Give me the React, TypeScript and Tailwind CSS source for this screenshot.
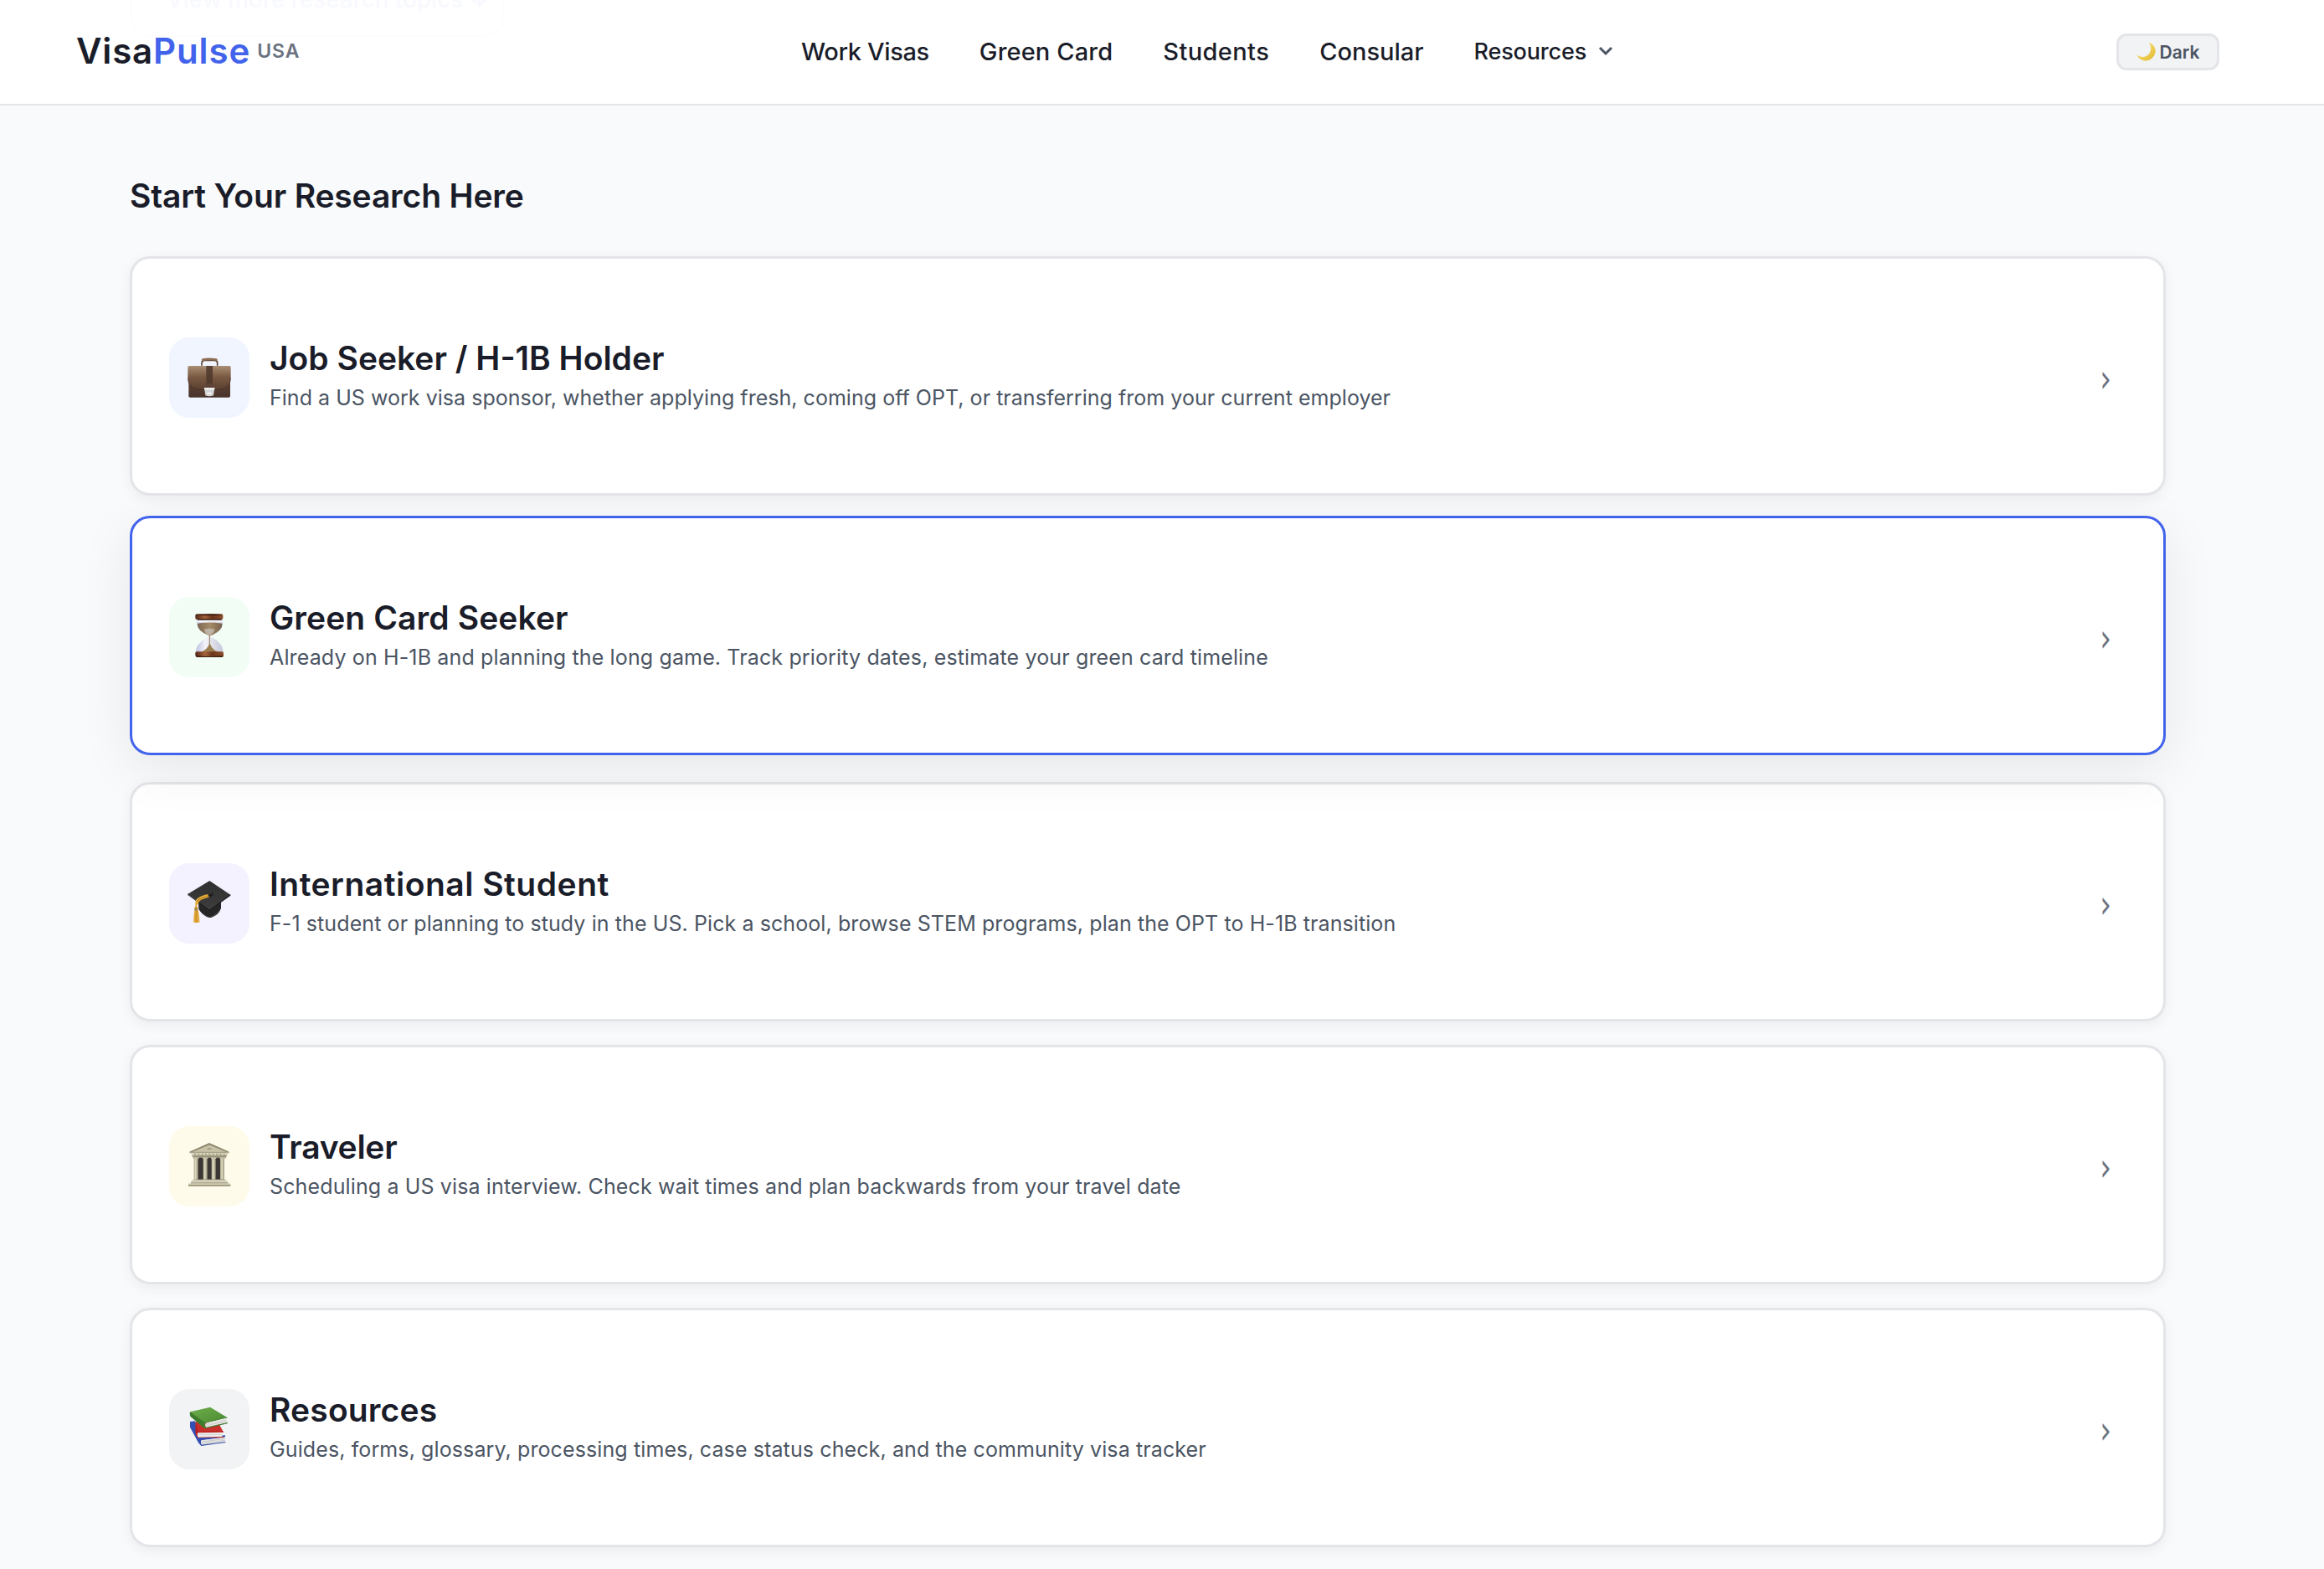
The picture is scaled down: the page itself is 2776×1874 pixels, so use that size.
import React from 'react';
import clsx from 'clsx';

type Card = {
  title: string;
  text: string;
  tile: string;
  titleClass: string;
  textClass: string;
  active?: boolean;
  icon: React.ReactNode;
};

function Briefcase() {
  return (
    <svg viewBox="36 39 288 288" className="size-24">
      <defs>
        <linearGradient id="bcFlap" x1="0" y1="0" x2="0" y2="1">
          <stop offset="0" stopColor="#a98f73" />
          <stop offset="0.45" stopColor="#7a5a43" />
          <stop offset="1" stopColor="#5a3f31" />
        </linearGradient>
        <linearGradient id="bcBody" x1="0" y1="0" x2="0" y2="1">
          <stop offset="0" stopColor="#6d4f3c" />
          <stop offset="1" stopColor="#49332a" />
        </linearGradient>
      </defs>
      <path d="M153 140v-9q0-10 11-10h34q11 0 11 10v9" fill="none" stroke="#5b4233" strokeWidth="5" />
      <path d="M157 119q24-5 48 0" fill="none" stroke="#8e6c52" strokeWidth="8" strokeLinecap="round" />
      <rect x="106" y="150" width="149" height="104" rx="5" fill="url(#bcBody)" />
      <path d="M109 141h144q4 0 4 5v38q0 43-50 43h-52q-52 0-52-43v-38q0-5 6-5z" fill="url(#bcFlap)" />
      <path d="M104 184q0 42 50 42h53q49 0 49-42" fill="none" stroke="#432f26" strokeWidth="2" />
      <path d="M169 141h23v64h-23z" fill="#4d372c" opacity="0.85" />
      <path d="M165 220v-8q0-9 15-9t15 9v8z" fill="#5d4335" />
      <path d="M162 220h37l-4 27q-15 6-29 0z" fill="#d5d6d7" />
      <path d="M162 220h37v6h-37z" fill="#f7f7f7" />
      <path d="M170 235h20v9h-20z" fill="#f3f3f3" stroke="#aaa" strokeWidth="1" />
    </svg>
  );
}

function Hourglass() {
  return (
    <svg viewBox="36 39 288 288" className="size-24">
      <defs>
        <linearGradient id="hgWood" x1="0" y1="0" x2="1" y2="0">
          <stop offset="0" stopColor="#512716" />
          <stop offset="0.35" stopColor="#a5633b" />
          <stop offset="0.6" stopColor="#6b351d" />
          <stop offset="1" stopColor="#8c4e2b" />
        </linearGradient>
        <linearGradient id="hgSand" x1="0" y1="0" x2="1" y2="0">
          <stop offset="0" stopColor="#7c6750" />
          <stop offset="0.5" stopColor="#a58b68" />
          <stop offset="1" stopColor="#77614c" />
        </linearGradient>
        <linearGradient id="hgGlass" x1="0" y1="0" x2="1" y2="0">
          <stop offset="0" stopColor="#b9bfe0" />
          <stop offset="0.35" stopColor="#f4f4fa" />
          <stop offset="0.65" stopColor="#dcdce6" />
          <stop offset="1" stopColor="#c3c7dd" />
        </linearGradient>
      </defs>
      <path d="M136 115h91v20q0 26-42 43v4q43 19 46 57h-100q2-38 46-57v-4q-41-17-41-43z" fill="url(#hgGlass)" />
      <path d="M137 134q44-7 90 0 0 27-41 43h-8q-41-16-41-43z" fill="url(#hgSand)" />
      <path d="M138 127q44-7 88 0" fill="none" stroke="#fff" strokeWidth="5" />
      <path d="M162 155q18-6 37 0-2 14-19 22-16-8-18-22z" fill="#c9c5bf" opacity="0.7" />
      <path d="M181 174v38" stroke="#927759" strokeWidth="3" />
      <path d="M144 239q30-10 36-32h3q6 22 35 32z" fill="#9a7f53" />
      <rect x="130" y="100" width="99" height="20" rx="6" fill="url(#hgWood)" />
      <ellipse cx="180" cy="103" rx="46" ry="3" fill="#442317" />
      <rect x="138" y="117" width="86" height="5" rx="2" fill="#45271b" />
      <rect x="130" y="235" width="101" height="19" rx="6" fill="url(#hgWood)" />
      <path d="M132 249q48 6 98 0v3q-3 3-8 3h-84q-4 0-6-3z" fill="#42200f" />
    </svg>
  );
}

function GradCap() {
  return (
    <svg viewBox="36 33 288 288" className="size-24">
      <defs>
        <linearGradient id="gcTop" x1="0" y1="0" x2="0" y2="1">
          <stop offset="0" stopColor="#303030" />
          <stop offset="1" stopColor="#3d3d3d" />
        </linearGradient>
        <linearGradient id="gcTassel" x1="0" y1="0" x2="1" y2="0">
          <stop offset="0" stopColor="#eab64a" />
          <stop offset="0.5" stopColor="#d39324" />
          <stop offset="1" stopColor="#efc368" />
        </linearGradient>
      </defs>
      <path d="M141 168l81 2v24q-8 24-37 34-6 1-12-2-25-13-31-30z" fill="#262626" />
      <path d="M150 205q18 17 32 20 24-10 39-31-6 25-37 34-22-2-34-23z" fill="#3c3c3c" />
      <path d="M181 96l75 50-75 56-79-58z" fill="url(#gcTop)" />
      <path d="M102 144l79 56 75-55v4l-75 54-79-57z" fill="#171717" />
      <ellipse cx="181" cy="144" rx="12" ry="9" fill="#1a1a1a" />
      <ellipse cx="180" cy="140" rx="10" ry="5" fill="#353535" />
      <path d="M176 147q-42 9-43 26v20" fill="none" stroke="#e5ab38" strokeWidth="6" />
      <path d="M178 152q-32 9-36 17l-6 12" fill="none" stroke="#e0a22c" strokeWidth="5" />
      <path d="M128 198h11q5 20 7 44 0 4-12 4t-11-4q1-24 5-44z" fill="url(#gcTassel)" />
      <rect x="127" y="190" width="12" height="14" rx="4" fill="#c98a25" />
      <path d="M128 199h10" stroke="#5d8f8a" strokeWidth="3" />
    </svg>
  );
}

function Bank() {
  return (
    <svg viewBox="36 30 288 288" className="size-24">
      <defs>
        <linearGradient id="bkCol" x1="0" y1="0" x2="1" y2="0">
          <stop offset="0" stopColor="#aba68b" />
          <stop offset="0.4" stopColor="#dedac2" />
          <stop offset="1" stopColor="#9d987d" />
        </linearGradient>
      </defs>
      <path d="M128 142h106v80h-106z" fill="#3b3734" />
      <path d="M180 91l71 31v5h-142v-5z" fill="#a8a389" />
      <path d="M180 98l58 24h-116z" fill="#c8c3a8" />
      <path d="M180 91l71 31h-8l-63-26-63 26h-8z" fill="#89856c" />
      <path d="M170 114l10-7 12 7z" fill="#9c967a" />
      <path d="M116 127h130v8h-130z" fill="#d5d0b7" />
      <path d="M118 135h125l-3 8h-118z" fill="#98937a" />
      <path d="M126 131h110" stroke="#a29d84" strokeWidth="5" strokeDasharray="6 7" />
      <rect x="125" y="143" width="15" height="78" fill="url(#bkCol)" />
      <rect x="158" y="143" width="15" height="78" fill="url(#bkCol)" />
      <rect x="188" y="143" width="15" height="78" fill="url(#bkCol)" />
      <rect x="219" y="143" width="15" height="78" fill="url(#bkCol)" />
      <path d="M121 142h21v5h-21zM156 142h19v5h-19zM186 142h19v5h-19zM217 142h21v5h-21z" fill="#c3bea4" />
      <path d="M119 221h122v7h-122z" fill="#cdc8ae" />
      <path d="M114 228h133v8h-133z" fill="#b3ae94" />
      <path d="M105 236h151v10h-151z" fill="#a39e84" />
      <path d="M114 229h133M106 238h149" stroke="#dcd8c2" strokeWidth="3" />
    </svg>
  );
}

function Books() {
  return (
    <svg viewBox="36 33 288 288" className="size-24">
      <defs>
        <linearGradient id="bkGreen" x1="0" y1="0" x2="1" y2="1">
          <stop offset="0" stopColor="#6fae4c" />
          <stop offset="1" stopColor="#4a8a30" />
        </linearGradient>
      </defs>
      <path d="M111 150l18-2 22 56 86-5v8l-84 10q-3 8 0 16l-2 4-10-11-30-56z" fill="#3550b4" />
      <path d="M151 217l86-12v17l-84 12q-5-9-2-17z" fill="#e4e4e4" />
      <path d="M153 223l83-12M154 229l82-12" stroke="#bdbdbd" strokeWidth="2" />
      <path d="M151 233l87-11v3l-87 12z" fill="#2b43a0" />
      <path d="M131 150l84 8 16 30-92 3v17q-7-8-8-17z" fill="#c92f2b" />
      <path d="M131 152v38q2 13 9 18l91-1v-3h-90q-5-7-1-14l91-2-2-4-88 2z" fill="#b32021" />
      <path d="M139 190l87-2v16l-86 2q-5-9-1-16z" fill="#ededeb" />
      <path d="M141 196h84" stroke="#c6c6c4" strokeWidth="2" />
      <path d="M112 115l71-17 62 38-81 19-52-36z" fill="url(#bkGreen)" />
      <path d="M111 115q-2 8 1 16l49 42 4 2 80-18v-5l-77 17q-8-5-1-15l77-18v-2l-80 19z" fill="#3f7b2c" />
      <path d="M168 155l74-17v15l-73 17q-7-6-1-15z" fill="#ececea" />
      <path d="M168 160l73-16M168 165l73-16" stroke="#bfbfbd" strokeWidth="2" />
    </svg>
  );
}

function Moon() {
  return (
    <svg viewBox="0 0 72 72" className="size-6 shrink-0">
      <defs>
        <linearGradient id="moon" x1="0" y1="0" x2="1" y2="1">
          <stop offset="0.3" stopColor="#f3da6b" />
          <stop offset="1" stopColor="#e3b92f" />
        </linearGradient>
      </defs>
      <path d="M45 2c20 8 28 26 20 44-7 16-24 25-40 21-12-3-21-11-24-22 9 9 22 12 34 6C52 42 57 22 45 2z" fill="url(#moon)" />
    </svg>
  );
}

const cards: Card[] = [
  {
    title: 'Job Seeker / H-1B Holder',
    text: 'Find a US work visa sponsor, whether applying fresh, coming off OPT, or transferring from your current employer',
    tile: 'bg-[#f0f5ff]',
    titleClass: 'tracking-normal',
    textClass: 'tracking-[0.03px]',
    icon: <Briefcase />,
  },
  {
    title: 'Green Card Seeker',
    text: 'Already on H-1B and planning the long game. Track priority dates, estimate your green card timeline',
    tile: 'bg-[#f1fdf5]',
    titleClass: 'tracking-[0.1px]',
    textClass: 'tracking-[0.14px]',
    active: true,
    icon: <Hourglass />,
  },
  {
    title: 'International Student',
    text: 'F-1 student or planning to study in the US. Pick a school, browse STEM programs, plan the OPT to H-1B transition',
    tile: 'bg-[#f4f2ff]',
    titleClass: 'tracking-[0.5px]',
    textClass: 'tracking-[0.09px]',
    icon: <GradCap />,
  },
  {
    title: 'Traveler',
    text: 'Scheduling a US visa interview. Check wait times and plan backwards from your travel date',
    tile: 'bg-[#fffbea]',
    titleClass: 'tracking-[-0.25px]',
    textClass: 'tracking-[0.13px]',
    icon: <Bank />,
  },
  {
    title: 'Resources',
    text: 'Guides, forms, glossary, processing times, case status check, and the community visa tracker',
    tile: 'bg-[#f2f3f5]',
    titleClass: 'tracking-[0.15px]',
    textClass: 'tracking-[0.11px]',
    icon: <Books />,
  },
];

function Header() {
  return (
    <header className="relative flex h-[126px] items-center overflow-hidden border-b-2 border-[#e4e5e9] bg-white pl-[91px] pr-[125px]">
      {/* page content faintly showing through the bar */}
      <div className="absolute -top-14 left-[155px] flex h-[100px] w-[447px] items-end rounded-3xl border-2 border-[#fdfdfe] pb-[26px] pl-[42px] text-[28px] font-medium leading-[34px] text-[#f8f9fe]">
        <span className="whitespace-nowrap tracking-[-0.1px]">View more research topics ↓</span>
      </div>
      <a className="flex w-[866px] shrink-0 items-center whitespace-nowrap pb-0.5 text-[42px] font-semibold leading-none tracking-[0.8px] text-[#1a1d29]">
        Visa<span className="tracking-[0.9px] text-[#4263eb]">Pulse</span>
        <span className="ml-2 text-[23px] tracking-[1px] text-[#6b7280]">USA</span>
      </a>
      <nav className="flex items-center gap-[60px] whitespace-nowrap pb-0.5 text-[29px] font-medium leading-none text-[#1a1d29]">
        <a className="tracking-[-0.35px]">Work Visas</a>
        <a className="tracking-[0.15px]">Green Card</a>
        <a className="tracking-[0.4px]">Students</a>
        <a>Consular</a>
        <a className="flex items-center gap-3.5 text-[27px] tracking-[-0.15px]">
          Resources
          <svg viewBox="0 0 18 12" className="h-3 w-[18px]" fill="none" stroke="#4b5563" strokeWidth="3">
            <path d="M2 2l7 7 7-7" />
          </svg>
        </a>
      </nav>
      <button className="ml-auto flex h-11 w-[123px] items-center justify-center gap-1 rounded-xl border-3 border-[#e4e5e9] bg-[#f2f3f5] text-[21px] font-semibold leading-none text-[#4b5563]">
        <Moon />
        Dark
      </button>
    </header>
  );
}

function TopicCard({ card }: { card: Card }) {
  return (
    <a
      className={clsx(
        'flex h-[286px] items-center rounded-3xl border-3 bg-white pl-11 pr-[60px] pt-1',
        card.active
          ? 'relative z-10 -translate-y-1 border-[#4263eb] shadow-[0_16px_64px_rgba(0,0,0,0.08)]'
          : 'border-[#e4e5e9] shadow-[0_4px_16px_rgba(0,0,0,0.06)]'
      )}
    >
      <span className={clsx('size-24 shrink-0 overflow-hidden rounded-3xl', card.tile)}>{card.icon}</span>
      <div className="ml-6 flex-1 whitespace-nowrap">
        <h3 className={clsx('text-[39px] font-semibold leading-[48px] text-[#1a1d29]', card.titleClass)}>{card.title}</h3>
        <p className={clsx('text-[25px] leading-[47px] text-[#4b5563]', card.textClass)}>{card.text}</p>
      </div>
      <span className="scale-x-75 pt-0.5 font-['DejaVu_Sans',sans-serif] text-[46px] leading-none text-[#6b7280]">›</span>
    </a>
  );
}

export default function App() {
  return (
    <div className="h-[1874px] w-[2776px] overflow-hidden bg-[#f9fafc] font-['Inter','Liberation_Sans',sans-serif]">
      <Header />
      <main className="ml-[155px] w-[2432px] pt-[84px]">
        <h2 className="h-24 text-[39px] font-semibold leading-[48px] tracking-[-0.16px] text-[#1a1d29]">Start Your Research Here</h2>
        <div className="flex flex-col gap-7">
          {cards.map((card) => (
            <TopicCard key={card.title} card={card} />
          ))}
        </div>
      </main>
    </div>
  );
}
